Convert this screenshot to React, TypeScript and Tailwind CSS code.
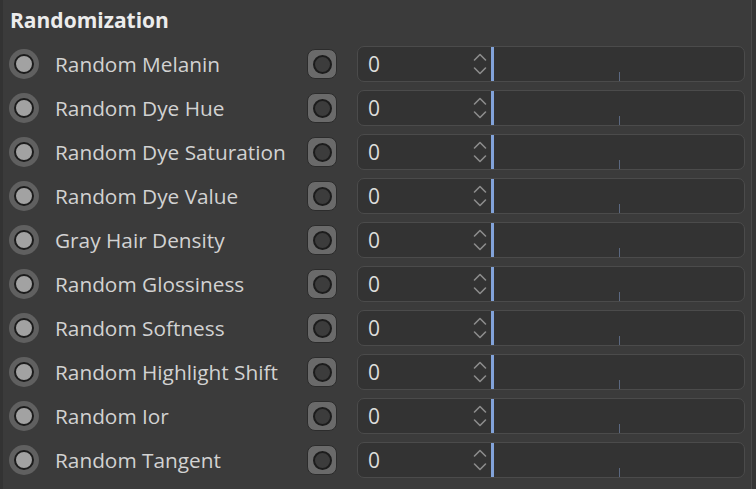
const rows = [
  "Random Melanin",
  "Random Dye Hue",
  "Random Dye Saturation",
  "Random Dye Value",
  "Gray Hair Density",
  "Random Glossiness",
  "Random Softness",
  "Random Highlight Shift",
  "Random Ior",
  "Random Tangent",
];

function Spinner() {
  return (
    <svg width="14" height="24" viewBox="0 0 14 24" fill="none" stroke="#8c8c8c" strokeWidth="1.6" strokeLinecap="round" strokeLinejoin="round">
      <path d="M1.5 8 L7 2.5 L12.5 8" />
      <path d="M1.5 16 L7 21.5 L12.5 16" />
    </svg>
  );
}

function ParamRow({ label }: { label: string }) {
  return (
    <div className="flex h-[36px] items-center">
      <div className="flex h-[30px] w-[30px] shrink-0 items-center justify-center rounded-full bg-[#606060]">
        <div className="h-[20px] w-[20px] rounded-full border-2 border-[#1c1c1c] bg-[#a2a2a2]" />
      </div>
      <span className="ml-[16px] w-[252px] shrink-0 overflow-hidden whitespace-nowrap text-[20.8px] leading-[28px] text-[#d2d2d2]">
        {label}
      </span>
      <div className="flex h-[30px] w-[30px] shrink-0 items-center justify-center rounded-[8px] border border-[#2c2c2c] bg-[#6a6a6a]">
        <div className="h-[19px] w-[19px] rounded-full border-2 border-[#1c1c1c] bg-[#3c3c3c]" />
      </div>
      <div className="ml-[20px] flex h-[36px] flex-1 overflow-hidden rounded-[7px] border border-[#4b4b4b] bg-[#333333]">
        <div className="flex w-[133px] shrink-0 items-center justify-between pl-[10px] pr-[4px]">
          <span className="text-[21px] leading-[28px] text-[#dcdcdc]">0</span>
          <Spinner />
        </div>
        <div className="w-[3px] shrink-0 bg-[#82a3da]" />
        <div className="relative flex-1">
          <div className="absolute bottom-0 left-1/2 h-[9px] w-px bg-[#5b6880]" />
        </div>
      </div>
    </div>
  );
}

export default function App() {
  return (
    <div
      className="flex h-[489px] w-[756px] bg-[#3b3b3b]"
      style={{ fontFamily: '"Open Sans", "Noto Sans", sans-serif' }}
    >
      <div className="w-[3px] shrink-0 bg-[#333333]" />
      <div className="flex flex-1 flex-col pr-[6px]">
        <div className="flex h-[46px] items-center pl-[7px] pb-[6px]">
          <span className="text-[21px] font-bold leading-[28px] text-[#ececec]">Randomization</span>
        </div>
        <div className="flex flex-col gap-[8px] pl-[6px]">
          {rows.map((r) => (
            <ParamRow key={r} label={r} />
          ))}
        </div>
      </div>
      <div className="w-[5px] shrink-0 border-l border-[#4a4a4a] bg-[#363636]" />
    </div>
  );
}
